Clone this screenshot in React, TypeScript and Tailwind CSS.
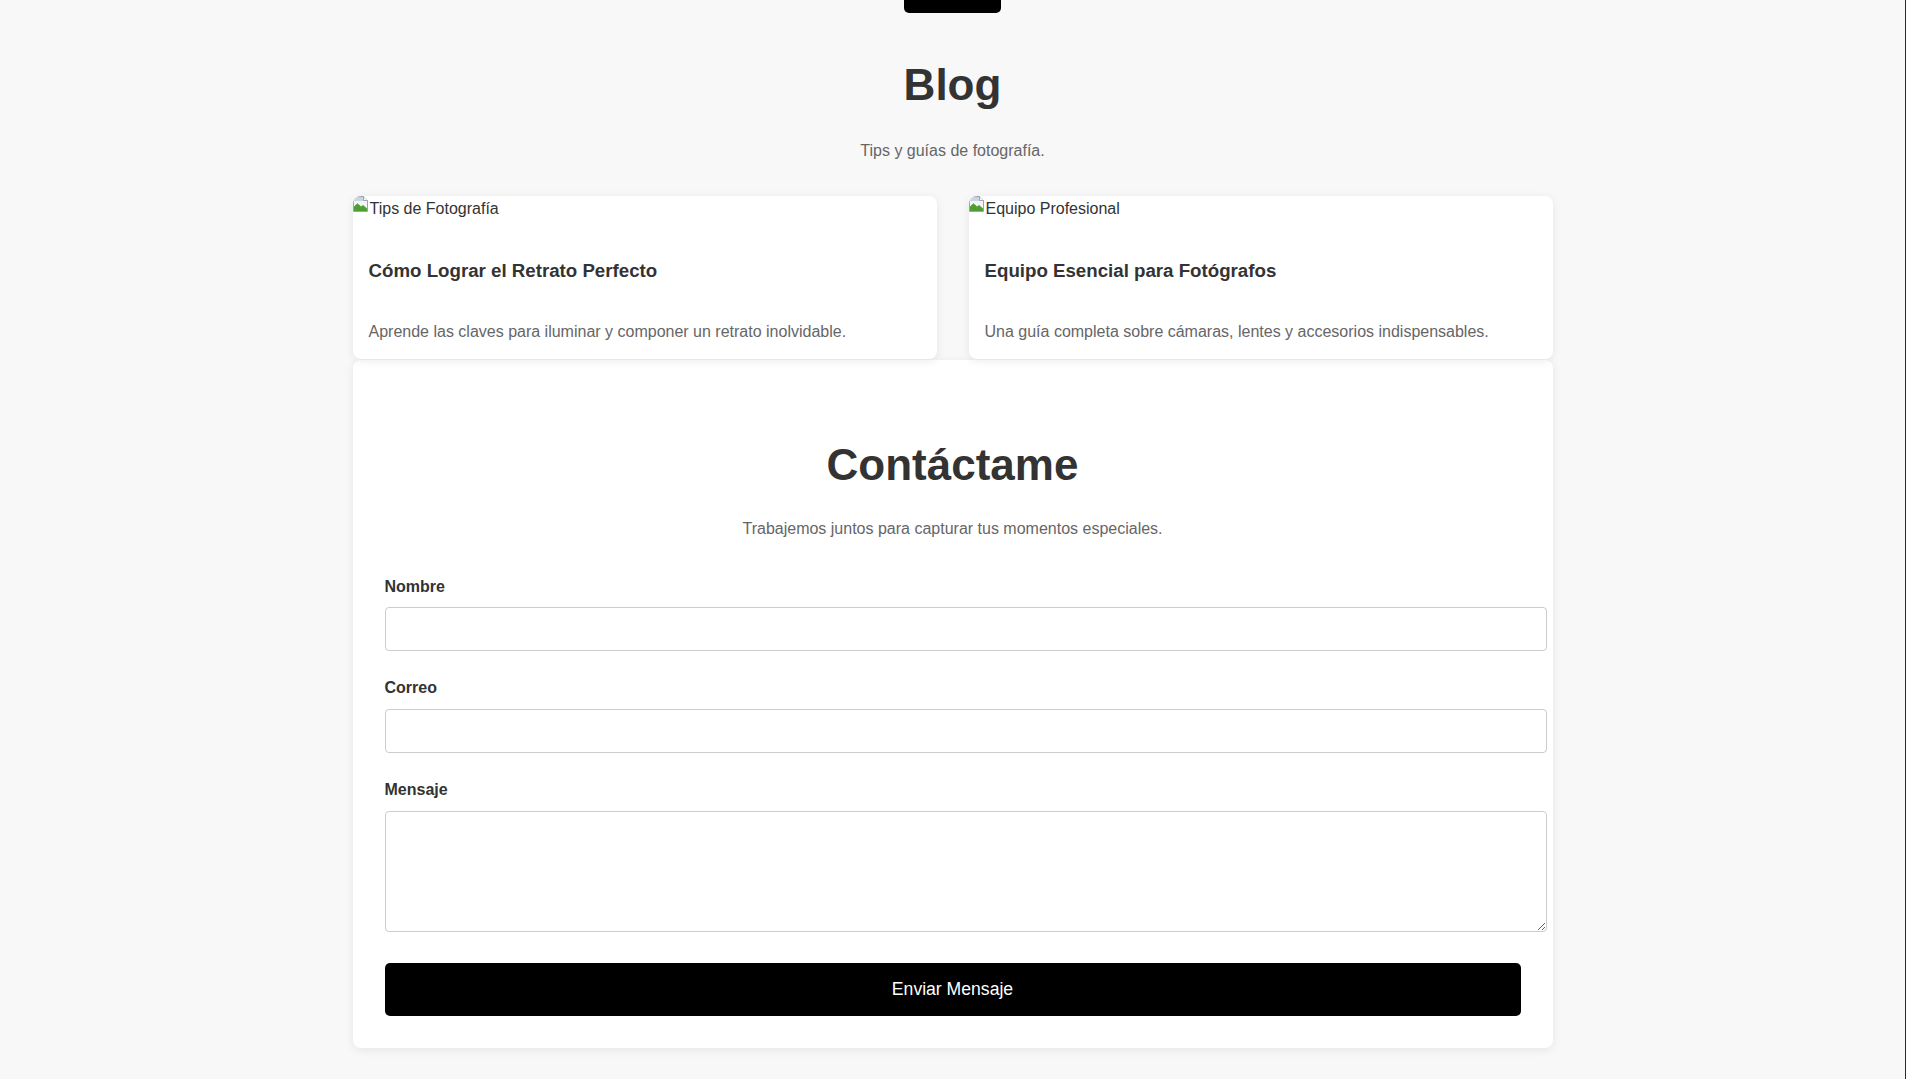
import type { ReactNode } from "react";

// Broken-image glyph shown where the post picture failed to load
function BrokenImage() {
  return (
    <svg width="16" height="16" viewBox="0 0 16 16" className="shrink-0">
      <path d="M0.5 0.5h10l4 4v11h-14z" fill="#f2f4f6" stroke="#9ea3a8" />
      <path d="M1 1h9.2v4H1z" fill="#c8d6e3" />
      <path d="M10.5 0.5v4h4" fill="#ffffff" stroke="#9ea3a8" />
      <path d="M1 15V10.5l3.5-3.3 3.5 3.4 2-1.7 4 3.6V15z" fill="#4f9e35" />
    </svg>
  );
}

function PostCard({ alt, title, text }: { alt: string; title: string; text: string }) {
  return (
    <article className="overflow-hidden rounded-lg bg-white shadow-[0_2px_10px_rgba(0,0,0,0.08)]">
      <div className="flex h-[25.6px] items-start">
        <BrokenImage />
        <span className="ml-px text-[16px] text-[#333]">{alt}</span>
      </div>
      <div className="px-4 pb-[14px]">
        <h3 className="mt-[34px] text-[18.7px] font-bold leading-[1.6] text-[#333]">{title}</h3>
        <p className="mt-[33px] text-[#666]">{text}</p>
      </div>
    </article>
  );
}

function Field({ label, children }: { label: string; children: ReactNode }) {
  return (
    <div className="mb-6">
      <label className="mb-2 block font-bold text-[#333]">{label}</label>
      {children}
    </div>
  );
}

export default function App() {
  const posts = [
    {
      alt: "Tips de Fotografía",
      title: "Cómo Lograr el Retrato Perfecto",
      text: "Aprende las claves para iluminar y componer un retrato inolvidable.",
    },
    {
      alt: "Equipo Profesional",
      title: "Equipo Esencial para Fotógrafos",
      text: "Una guía completa sobre cámaras, lentes y accesorios indispensables.",
    },
  ];

  return (
    <div className="min-h-screen border-r border-[#2b2b2b] bg-[#f8f8f8] pb-[31px] font-['Liberation_Sans',Arial,sans-serif] text-[16px] leading-[1.6] text-[#333]">
      {/* bottom of the previous section's button */}
      <div className="flex justify-center">
        <div className="h-[13px] w-[97px] rounded-b-[5px] bg-black" />
      </div>

      {/* ── BLOG ── */}
      <section className="mx-auto max-w-[1200px]">
        <h2 className="mt-[46px] text-center text-[44px] font-bold leading-[1.2] text-[#333]">Blog</h2>
        <p className="mt-[26px] text-center text-[#666]">Tips y guías de fotografía.</p>
        <div className="mt-[33px] grid grid-cols-2 gap-8">
          {posts.map((p) => (
            <PostCard key={p.title} {...p} />
          ))}
        </div>
      </section>

      {/* ── CONTACTO ── */}
      <section className="mx-auto mt-px max-w-[1200px] rounded-lg bg-white px-8 pb-8 pt-[79px] shadow-[0_2px_10px_rgba(0,0,0,0.08)]">
        <h2 className="text-center text-[44px] font-bold leading-[1.2] text-[#333]">Contáctame</h2>
        <p className="mt-[25px] text-center text-[#666]">Trabajemos juntos para capturar tus momentos especiales.</p>

        <form className="mt-8" onSubmit={(e) => e.preventDefault()}>
          <Field label="Nombre">
            <input
              type="text"
              className="box-content block h-[18px] w-full rounded border border-[#ccc] bg-white px-3 py-3 leading-[normal] outline-none"
            />
          </Field>
          <Field label="Correo">
            <input
              type="email"
              className="box-content block h-[18px] w-full rounded border border-[#ccc] bg-white px-3 py-3 leading-[normal] outline-none"
            />
          </Field>
          <div>
            <label className="mb-2 block font-bold text-[#333]">Mensaje</label>
            <textarea className="box-content block h-[95px] w-full resize-y rounded border border-[#ccc] bg-white px-3 py-3 leading-[normal] outline-none" />
          </div>
          <button
            type="submit"
            className="mt-[31px] flex h-[53px] w-full items-center justify-center rounded-[5px] bg-black text-[17.6px] text-white"
          >
            Enviar Mensaje
          </button>
        </form>
      </section>
    </div>
  );
}
